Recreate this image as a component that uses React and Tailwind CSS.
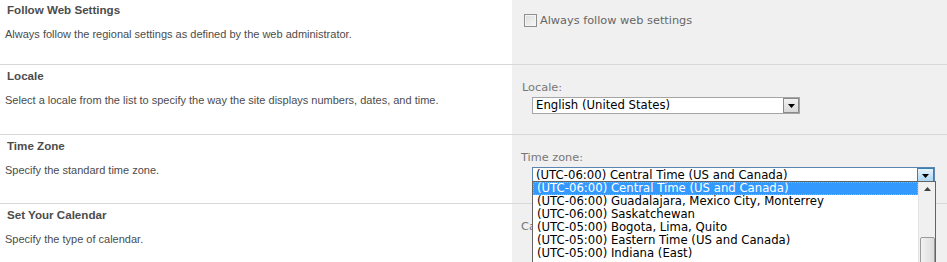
import React from "react";

function Arrow() {
  return (
    <svg width="7" height="4" viewBox="0 0 7 4">
      <path d="M0 0h7L3.5 4z" fill="#000" />
    </svg>
  );
}

function LeftCell({ title, desc, first }) {
  return (
    <div
      className={`w-[512px] shrink-0 bg-white ${first ? "pt-[2px]" : "pt-[3px]"} font-['Liberation_Sans',Arial,sans-serif]`}
    >
      <div className="pl-[7px] text-[11.6px] leading-[16px] font-bold text-[#4c4c4c]">{title}</div>
      <div className="pl-[5px] mt-2 text-[11px] leading-[16px] text-[#4c4c4c]">{desc}</div>
    </div>
  );
}

const zones = [
  "(UTC-06:00) Central Time (US and Canada)",
  "(UTC-06:00) Guadalajara, Mexico City, Monterrey",
  "(UTC-06:00) Saskatchewan",
  "(UTC-05:00) Bogota, Lima, Quito",
  "(UTC-05:00) Eastern Time (US and Canada)",
  "(UTC-05:00) Indiana (East)",
];

export default function App() {
  return (
    <div className="relative w-[947px] h-[262px] overflow-hidden bg-white">
      {/* Row 1 */}
      <div className="flex h-[65px] border-b border-[#d8d8d8]">
        <LeftCell
          first
          title="Follow Web Settings"
          desc="Always follow the regional settings as defined by the web administrator."
        />
        <div className="flex-1 bg-[#f0f0f0] pl-[12px] pt-[14px] font-['DejaVu_Sans',Verdana,sans-serif]">
          <div className="flex items-center gap-[3px] text-[11.3px] leading-[13px] text-[#666]">
            <span className="w-[13px] h-[13px] border border-[#8e8f8f] bg-gradient-to-br from-[#dcdcdc] to-[#f8f8f8] shadow-[inset_0_0_0_1px_#f4f4f4]" />
            <span>Always follow web settings</span>
          </div>
        </div>
      </div>

      {/* Row 2 */}
      <div className="flex h-[70px] border-b border-[#d8d8d8]">
        <LeftCell
          title="Locale"
          desc="Select a locale from the list to specify the way the site displays numbers, dates, and time."
        />
        <div className="flex-1 bg-[#f0f0f0] pl-[10px] pt-[15px] font-['DejaVu_Sans',Verdana,sans-serif]">
          <div className="text-[11.3px] leading-[16px] text-[#777]">Locale:</div>
          <div className="ml-[10px] mt-[1px] flex w-[268px] h-[17px] border border-[#a5a5a5] bg-white">
            <div className="flex-1 pl-[3px] text-[11.7px] leading-[15px] text-black">English (United States)</div>
            <div className="w-[16px] h-[15px] border border-[#8a8a8a] bg-gradient-to-b from-[#f2f2f2] to-[#d8d8d8] flex items-center justify-center">
              <Arrow />
            </div>
          </div>
        </div>
      </div>

      {/* Row 3 */}
      <div className="flex h-[69px] border-b border-[#d8d8d8]">
        <LeftCell title="Time Zone" desc="Specify the standard time zone." />
        <div className="flex-1 bg-[#f0f0f0] pl-[9px] pt-[15px] font-['DejaVu_Sans',Verdana,sans-serif]">
          <div className="text-[11.3px] leading-[16px] text-[#777]">Time zone:</div>
          <div className="ml-[11px] mt-[1px] flex w-[403px] h-[17px] border border-[#5b86b4] bg-white">
            <div className="flex-1 pl-[3px] text-[11.7px] leading-[15px] text-black whitespace-nowrap">
              (UTC-06:00) Central Time (US and Canada)
            </div>
            <div className="w-[17px] h-[15px] border border-[#3c7fb1] bg-gradient-to-b from-[#e6f3fb] to-[#a9d5f1] flex items-center justify-center">
              <Arrow />
            </div>
          </div>
        </div>
      </div>

      {/* Row 4 */}
      <div className="flex h-[58px]">
        <LeftCell title="Set Your Calendar" desc="Specify the type of calendar." />
        <div className="flex-1 bg-[#f0f0f0] pl-[9px] pt-[15px] font-['DejaVu_Sans',Verdana,sans-serif]">
          <div className="text-[11.3px] leading-[16px] text-[#777]">Calendar:</div>
        </div>
      </div>

      {/* Open dropdown list */}
      <div className="absolute left-[532px] top-[181px] w-[404px] h-[90px] border border-[#646464] bg-white flex font-['DejaVu_Sans',Verdana,sans-serif]">
        <div className="flex-1 flex flex-col">
          {zones.map((z, i) => (
            <div
              key={z}
              className={`h-[13px] pl-[4px] text-[11.7px] leading-[13px] whitespace-nowrap ${
                i === 0
                  ? "bg-[#3399ff] text-white outline outline-1 outline-dotted outline-[#e8a060] -outline-offset-1"
                  : "text-black"
              }`}
            >
              {z}
            </div>
          ))}
        </div>
        <div className="w-[17px] bg-[#f0f0f0] border-l border-[#e4e4e4] flex flex-col items-center">
          <div className="h-[17px] flex items-center justify-center">
            <svg width="7" height="4" viewBox="0 0 7 4">
              <path d="M0 4h7L3.5 0z" fill="#404040" />
            </svg>
          </div>
          <div className="mt-[41px] w-[15px] h-[40px] rounded-[2px] border border-[#9a9a9a] bg-gradient-to-r from-[#f2f2f2] to-[#dcdcdc]" />
        </div>
      </div>
    </div>
  );
}
